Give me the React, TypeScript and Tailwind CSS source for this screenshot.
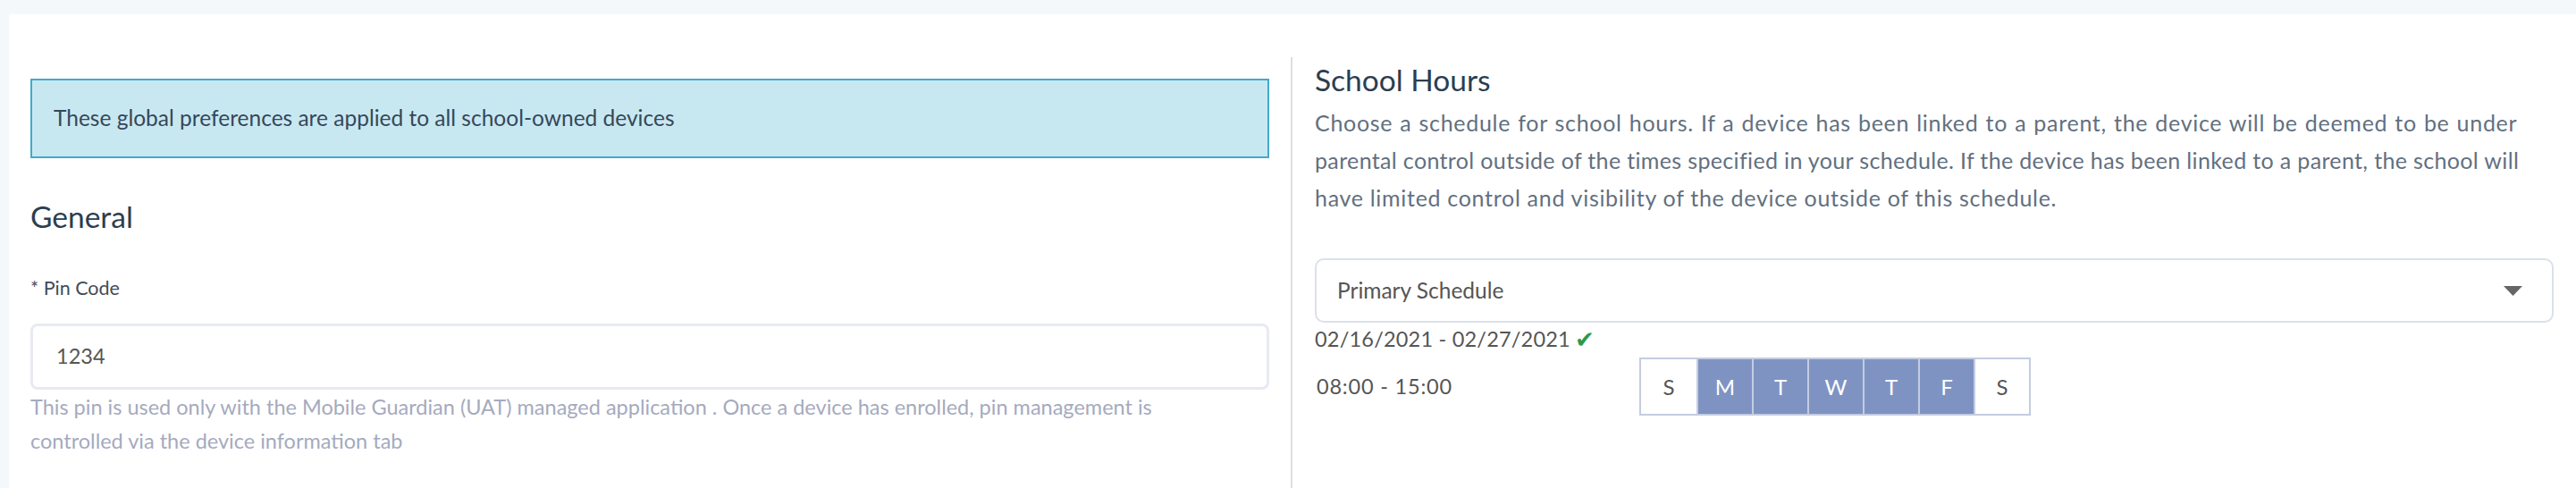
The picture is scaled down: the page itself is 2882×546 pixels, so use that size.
import React from "react";

const days = [
  { d: "S", on: false },
  { d: "M", on: true },
  { d: "T", on: true },
  { d: "W", on: true },
  { d: "T", on: true },
  { d: "F", on: true },
  { d: "S", on: false },
];

export default function App() {
  return (
    <div
      className="w-[2882px] h-[546px] bg-[#f4f8fb] pt-[16px] pl-[10px] overflow-hidden"
      style={{ fontFamily: "Lato, 'Open Sans', sans-serif" }}
    >
      <div className="bg-white h-full pl-[24px] pt-[48px] flex">
        {/* Left column */}
        <div className="flex-1 pr-[24px] pt-[24px]">
          <div className="h-[89px] border-2 border-[#44a9ca] bg-[#c8e8f1] flex items-center px-[24px] text-[24.5px] text-[#35475a]">
            These global preferences are applied to all school-owned devices
          </div>
          <h2 className="mt-[45px] text-[33.5px] leading-[40px] text-[#2c3e50] font-normal">General</h2>
          <div className="mt-[45px] text-[21.5px] leading-[30px] text-[#434b56]">* Pin Code</div>
          <div className="mt-[25px] h-[74px] border-[3px] border-[#e7eaf2] rounded-[8px] flex items-center px-[26px] text-[23.5px] text-[#555]">
            1234
          </div>
          <p className="text-[23.5px] leading-[38px] text-[#a5aabe] pr-[40px]">
            This pin is used only with the Mobile Guardian (UAT) managed application . Once a device has enrolled, pin management is controlled via the device information tab
          </p>
        </div>
        {/* Right column */}
        <div className="flex-1 min-w-0 border-l-2 border-[#dedede] pl-[25px] pr-[25px] pt-[5px]">
          <h2 className="text-[33.5px] leading-[40px] text-[#2c3e50] font-normal">School Hours</h2>
          <p className="mt-[7px] text-[25px] leading-[42px] text-[#62707f]">
            <span className="block whitespace-nowrap tracking-[0.7px] [word-spacing:1px]">
              Choose a schedule for school hours. If a device has been linked to a parent, the device will be deemed to be under
            </span>
            <span className="block whitespace-nowrap tracking-[0.35px]">
              parental control outside of the times specified in your schedule. If the device has been linked to a parent, the school will
            </span>
            <span className="block whitespace-nowrap tracking-[0.7px]">
              have limited control and visibility of the device outside of this schedule.
            </span>
          </p>
          <div className="mt-[47px] h-[72px] border-2 border-[#dce0eb] rounded-[10px] flex items-center justify-between pl-[23px] pr-[33px] text-[24.5px] text-[#555]">
            <span>Primary Schedule</span>
            <svg width="21" height="11" viewBox="0 0 21 11">
              <polygon points="0,0 21,0 10.5,11" fill="#666" />
            </svg>
          </div>
          <div className="mt-[4px] h-[30px] flex items-center text-[23.5px] text-[#555]">
            <span className="tracking-[0.2px]">02/16/2021 - 02/27/2021</span>
            <span className="ml-[5px] text-[#2d9a48] text-[26px] leading-none" style={{ fontFamily: "'DejaVu Sans', sans-serif" }}>
              ✔
            </span>
          </div>
          <div className="mt-[5px] flex items-center">
            <div className="w-[363px] pl-[2px] text-[23.5px] tracking-[0.8px] text-[#555]">08:00 - 15:00</div>
            <div className="flex border-2 border-[#c3cce0]">
              {days.map((x, i) => (
                <div
                  key={i}
                  className={`w-[62px] h-[61px] flex items-center justify-center text-[24px] ${
                    i > 0 ? "border-l-2 border-[#c3cce0]" : ""
                  } ${x.on ? "bg-[#7f93c3] text-white" : "bg-white text-[#555]"}`}
                >
                  {x.d}
                </div>
              ))}
            </div>
          </div>
        </div>
      </div>
    </div>
  );
}
